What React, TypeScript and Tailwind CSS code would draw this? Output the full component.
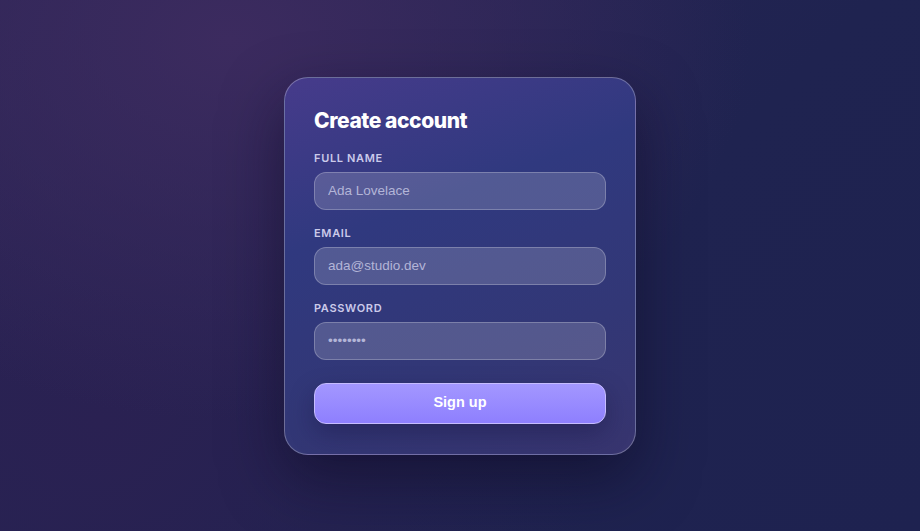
import React from "react";

const fields = [
  { id: "name", label: "Full name", placeholder: "Ada Lovelace", type: "text" },
  { id: "email", label: "Email", placeholder: "ada@studio.dev", type: "email" },
  { id: "password", label: "Password", placeholder: "••••••••", type: "text" },
];

export default function App() {
  return (
    <div className="flex h-[531px] w-full items-center justify-center bg-[radial-gradient(ellipse_520px_380px_at_230px_40px,#3c2b5f_0%,rgba(60,43,95,0)_100%),radial-gradient(ellipse_500px_400px_at_100px_420px,#2a2152_0%,rgba(42,33,82,0)_100%),linear-gradient(135deg,#2c2556,#1f2350_60%,#1e2250)] font-['Inter',sans-serif]">
      <form
        className="flex h-[378px] w-[352px] flex-col rounded-[24px] border border-[rgba(255,255,255,0.28)] bg-[linear-gradient(160deg,#463b8b_0%,#30397f_35%,#323776_70%,#38356f_100%)] p-[29px] shadow-[0_24px_60px_rgba(12,10,35,0.55)]"
        onSubmit={(e) => e.preventDefault()}
      >
        <h1 className="mb-[15px] text-[21px] leading-[28px] font-extrabold tracking-[-0.02em] text-white">
          Create account
        </h1>

        <div className="flex flex-col gap-[15px]">
          {fields.map((f) => (
            <div key={f.id} className="flex flex-col gap-[6px]">
              <label
                htmlFor={f.id}
                className="text-[11px] leading-[16px] font-semibold tracking-[0.06em] text-[#cbcaea] uppercase"
              >
                {f.label}
              </label>
              <input
                id={f.id}
                name={f.id}
                type={f.type}
                placeholder={f.placeholder}
                className="h-[38px] w-full rounded-[12px] border border-[rgba(255,255,255,0.24)] bg-[rgba(255,255,255,0.17)] px-[13px] font-['Liberation_Sans',Arial,sans-serif] text-[13.5px] text-white outline-none placeholder:text-[#b3b5d7]"
              />
            </div>
          ))}
        </div>

        <button
          type="submit"
          className="mt-[23px] h-[41px] w-full rounded-[12px] border border-[#c6bcff] bg-[linear-gradient(180deg,#a397ff,#8e7ffe)] font-['Liberation_Sans',Arial,sans-serif] text-[14.5px] font-bold text-white shadow-[0_10px_24px_rgba(20,15,60,0.35)]"
        >
          Sign up
        </button>
      </form>
    </div>
  );
}
